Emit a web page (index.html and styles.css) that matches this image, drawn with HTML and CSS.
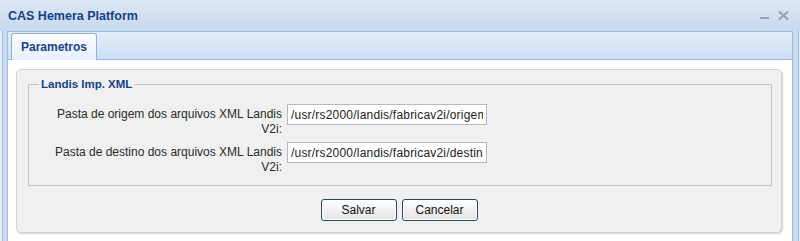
FILE: index.html
```html
<!DOCTYPE html>
<html lang="pt">
<head>
<meta charset="UTF-8">
<title>CAS Hemera Platform</title>
<link rel="stylesheet" href="styles.css">
</head>
<body>
<div class="window">
    <div class="window-header">
        <span class="window-title">CAS Hemera Platform</span>
        <div class="tools">
            <span class="tool">
                <svg width="15" height="15" viewBox="0 0 15 15"><rect x="3" y="9" width="9" height="2" fill="#8da3c3"/></svg>
            </span>
            <span class="tool">
                <svg width="15" height="15" viewBox="0 0 15 15"><path d="M3 3.5 L12 11.5 M12 3.5 L3 11.5" stroke="#8da3c3" stroke-width="1.8" fill="none"/></svg>
            </span>
        </div>
    </div>
    <div class="window-frame">
        <div class="window-body">
            <div class="tab-strip">
                <div class="tab active">Parametros</div>
            </div>
            <div class="tab-body">
                <div class="form-box">
                    <fieldset class="fieldset">
                        <legend>Landis Imp. XML</legend>
                        <div class="form-row">
                            <label class="form-label" for="origem">Pasta de origem dos arquivos XML Landis V2i:</label>
                            <input class="form-input" id="origem" type="text" value="/usr/rs2000/landis/fabricav2i/origem">
                        </div>
                        <div class="form-row">
                            <label class="form-label" for="destino">Pasta de destino dos arquivos XML Landis V2i:</label>
                            <input class="form-input" id="destino" type="text" value="/usr/rs2000/landis/fabricav2i/destino">
                        </div>
                    </fieldset>
                    <div class="buttons">
                        <button class="btn">Salvar</button>
                        <button class="btn">Cancelar</button>
                    </div>
                </div>
            </div>
        </div>
    </div>
</div>
</body>
</html>
```

FILE: styles.css
```css
html, body {
    margin: 0;
    height: 100%;
    overflow: hidden;
}

body {
    font-family: Tahoma, "Liberation Sans", Arial, sans-serif;
    font-size: 12px;
    color: #222;
    background: #e6edf7;
}

.window {
    height: 100%;
    display: flex;
    flex-direction: column;
}

.window-header {
    height: 31px;
    flex: none;
    display: flex;
    align-items: center;
    justify-content: space-between;
    padding: 0 9px 0 8px;
    background: linear-gradient(#dce7f5, #c8d8ec);
}

.window-title {
    font-weight: bold;
    font-size: 12.5px;
    color: #15428b;
}

.tools {
    display: flex;
    gap: 4px;
}

.tool {
    width: 15px;
    height: 15px;
    display: block;
}

.tool svg {
    display: block;
}

.window-frame {
    flex: 1;
    margin: 0 1px 0 2px;
    padding: 0 5px 0 4px;
    background: #cddcef;
    border-left: 1px solid #99bbe8;
    border-right: 1px solid #99bbe8;
    display: flex;
}

.window-body {
    flex: 1;
    background: #fff;
    border-left: 1px solid #99bbe8;
    border-right: 1px solid #99bbe8;
}

.tab-strip {
    height: 26px;
    padding-top: 1px;
    border-top: 1px solid #99bbe8;
    border-bottom: 1px solid #99bbe8;
    background: linear-gradient(#e3edfa, #cedff5);
    display: flex;
}

.tab {
    margin-left: 3px;
    margin-bottom: -1px;
    padding: 0 9px;
    border: 1px solid #8db2e3;
    border-bottom: none;
    border-radius: 3px 3px 0 0;
    display: flex;
    align-items: center;
    font-weight: bold;
    color: #15428b;
}

.tab.active {
    background: linear-gradient(#fbfdff, #e6f0fd);
}

.tab-body {
    padding: 9px 10px 20px 8px;
}

.form-box {
    height: 162px;
    background: #f0f0f0;
    border: 1px solid #d2d2d2;
    border-radius: 5px;
    box-shadow: 1px 1px 2px rgba(0, 0, 0, 0.18);
    display: flex;
    flex-direction: column;
}

.fieldset {
    margin: 8px 9px 0 11px;
    padding: 13px 10px 5px 10px;
    border: 1px solid #c3c3c3;
    min-width: 0;
}

.fieldset legend {
    padding: 0 2px;
    font-weight: bold;
    font-size: 11.5px;
    line-height: 13px;
    color: #15428b;
}

.form-row {
    display: flex;
    align-items: flex-start;
    margin-bottom: 5px;
}

.form-label {
    width: 243px;
    padding: 3px 5px 0 0;
    text-align: right;
    line-height: 15px;
    color: #2a2a2a;
}

.form-input {
    width: 192px;
    height: 19px;
    padding: 0 3px;
    margin: 0;
    border: 1px solid #b5b8c8;
    background: #fff;
    font: inherit;
    letter-spacing: 0.2px;
    color: #222;
}

.buttons {
    margin-top: 13px;
    display: flex;
    justify-content: center;
    gap: 5px;
}

.btn {
    width: 76px;
    height: 22px;
    padding: 0;
    font: inherit;
    color: #111;
    border: 1px solid #2f4565;
    border-radius: 3px;
    background: linear-gradient(#fdfdfd, #e4e4e4);
    box-shadow: inset 0 0 0 1px #fff;
}
```
